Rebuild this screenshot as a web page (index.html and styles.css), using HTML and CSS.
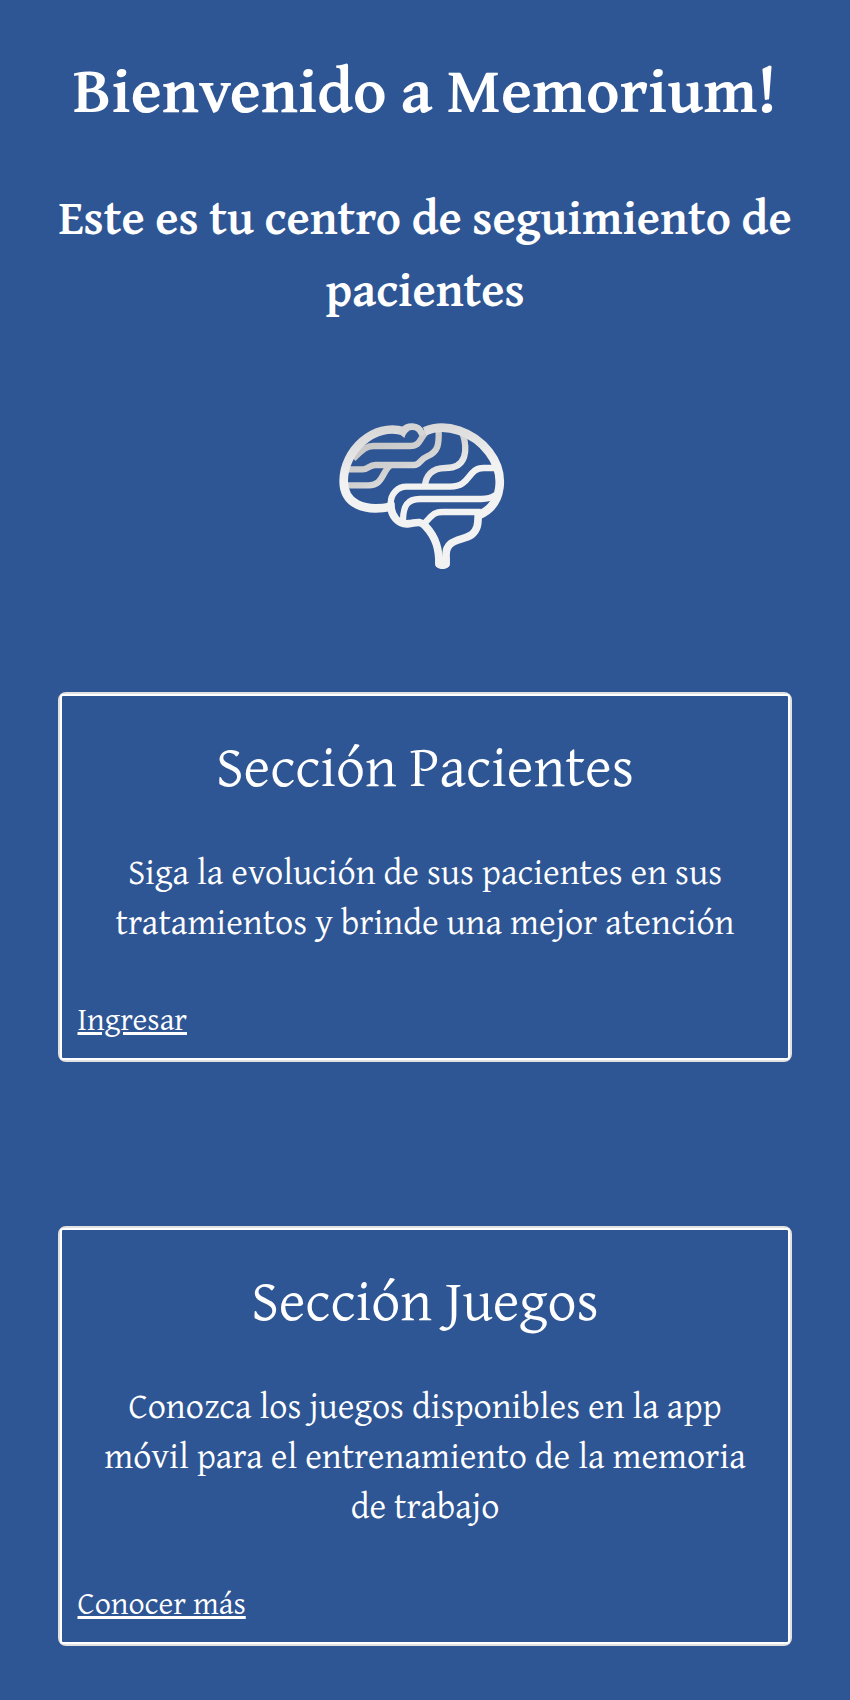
FILE: index.html
```html
<!DOCTYPE html>
<html lang="es">
<head>
<meta charset="utf-8">
<title>Memorium</title>
<link rel="stylesheet" href="styles.css">
</head>
<body>
<main class="page">
<h1 class="title">Bienvenido a Memorium!</h1>
<h2 class="subtitle">Este es tu centro de seguimiento de<br>pacientes</h2>
<svg class="brain" viewBox="0 0 555 510" aria-hidden="true">
<defs>
<linearGradient id="shade" gradientUnits="userSpaceOnUse" x1="170" y1="60" x2="280" y2="290"><stop offset="0" stop-color="#c6c6c6"/><stop offset=".45" stop-color="#d2d2d2"/><stop offset=".85" stop-color="#f2f2f2"/></linearGradient>
<linearGradient id="rim" gradientUnits="userSpaceOnUse" x1="180" y1="40" x2="200" y2="200"><stop offset="0" stop-color="#d6d6d6"/><stop offset="1" stop-color="#f2f2f2"/></linearGradient>
</defs>
<g class="folds" stroke="url(#shade)">
<path d="M70 146C92 126 104 108 130 108H240C262 108 268 96 275 84C283 70 290 62 302 57"/>
<path d="M55 178H98C117 178 116 165 136 165H252C270 165 270 148 290 140C326 124 327 103 326 62"/>
<path d="M52 226H116C158 226 155 188 180 167"/>
<path d="M398 70C413 118 412 174 346 174C306 174 286 198 285 230"/>
</g>
<g class="folds" stroke="#f2f2f2">
<path d="M219 334C219 286 233 267 270 267H454C475 267 482 263 497 255"/>
<path d="M282 341C306 318 309 306 338 306H452"/>
<path d="M492 174H461C411 174 424 230 361 230H229C205 230 182 249 182 281"/>
</g>
<g class="outline" stroke="url(#rim)">
<path d="M222 64C132 36 41 122 41 213C41 281 101 307 183 290"/>
<path d="M284 64C348 36 431 66 477 126C527 191 520 284 447 315"/>
</g>
<g class="stem">
<path d="M183 284C182 317 204 345 237 341C257 339 270 331 286 348C320 384 327 420 327 461"/>
<path d="M445 311C443 330 448 356 425 374C399 393 348 385 348 435V461"/>
</g>
<path class="bump" d="M219 62C232 46 264 44 274 68"/>
<path d="M206 70L223 84Q226 70 238 62L222 52Z" fill="#d5d5d5"/>
<path d="M316 440H359V461C359 482 316 482 316 461Z" fill="#f2f2f2"/>
</svg>
<section class="card">
<h3 class="card-title">Sección Pacientes</h3>
<p class="card-text">Siga la evolución de sus pacientes en sus<br>tratamientos y brinde una mejor atención</p>
<a class="card-link" href="#">Ingresar</a>
</section>
<section class="card">
<h3 class="card-title">Sección Juegos</h3>
<p class="card-text">Conozca los juegos disponibles en la app<br>móvil para el entrenamiento de la memoria<br>de trabajo</p>
<a class="card-link" href="#">Conocer más</a>
</section>
</main>
</body>
</html>
```
FILE: styles.css
```css
* { box-sizing: border-box; }
body { margin: 0; background: #2e5594; color: #fff; font-family: "Gentium Plus", "Gentium Book Plus", "Liberation Serif", serif; }
.page { display: flex; flex-direction: column; min-height: 1700px; padding: 47px 58px 54px; }
.title, .subtitle, .card-title, .card-text { margin: 0; text-align: center; white-space: nowrap; }
.title { font-size: 64px; line-height: 84px; font-weight: 700; }
.subtitle { margin-top: 50px; font-size: 48px; line-height: 72px; font-weight: 700; }
.brain { display: block; width: 185px; height: 170px; margin: 85px 0 0 272px; }
.folds, .outline, .stem, .bump { fill: none; }
.folds { stroke-width: 19; }
.outline { stroke-width: 26; }
.stem { stroke: #f2f2f2; stroke-width: 23; stroke-linejoin: round; stroke-linecap: round; }
.bump { stroke: #d5d5d5; stroke-width: 20; stroke-linecap: round; }
.card { margin-top: 164px; padding: 31px 17.5px 19px; border: 2px solid #e1e1e1; border-radius: 8px; position: relative; }
.card::before { content: ""; position: absolute; inset: 0; border: 2px solid #fff; border-radius: 3px; pointer-events: none; }
.brain + .card { margin-top: 112px; }
.card-title { font-size: 57.6px; line-height: 80px; font-weight: 400; }
.card-text { margin-top: 41px; font-size: 36px; line-height: 50px; letter-spacing: 0.03px; }
.card-link { display: block; width: max-content; margin-top: 51px; font-size: 32px; line-height: 44px; color: #fff; }
```
